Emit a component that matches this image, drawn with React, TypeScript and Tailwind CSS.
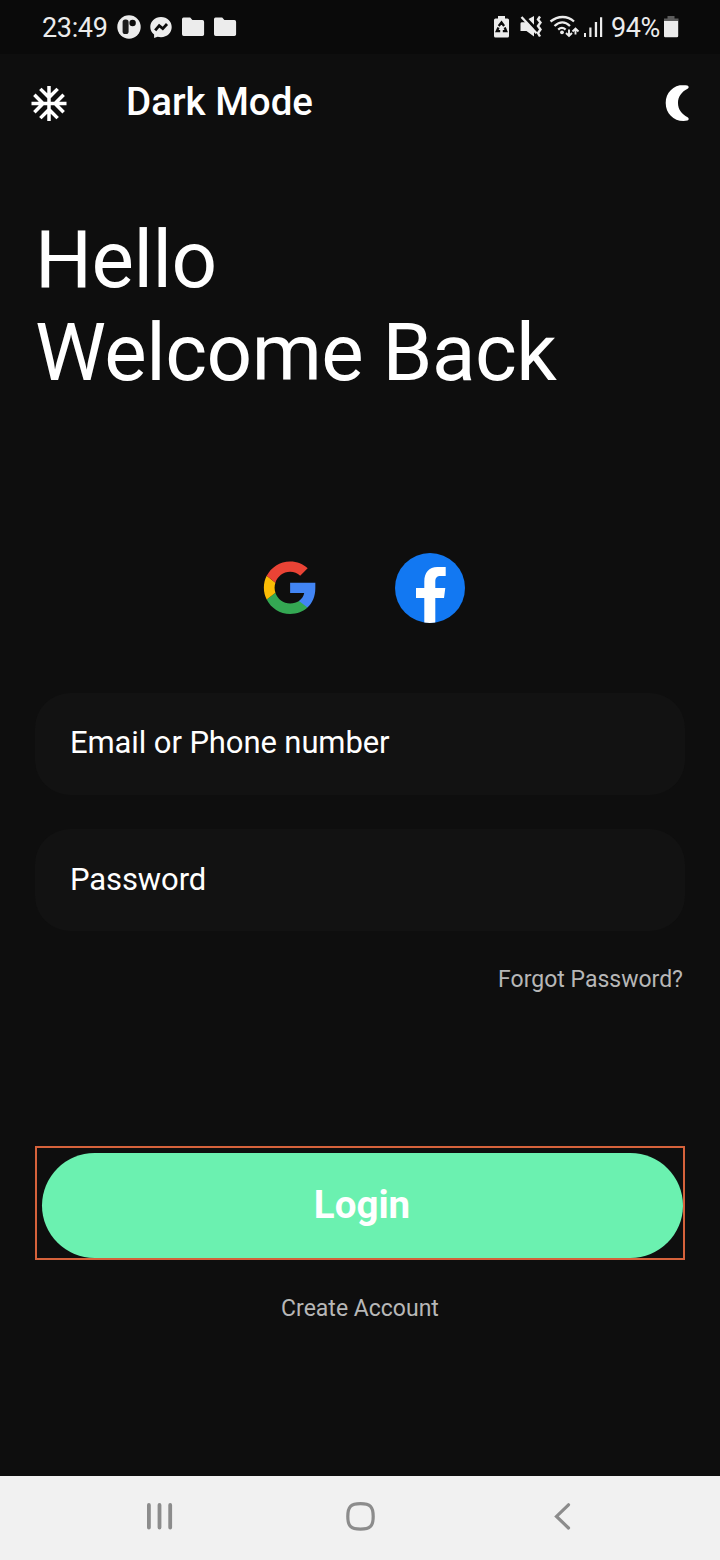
import type { ReactNode } from "react";
import { MdAcUnit } from "react-icons/md";

function StatusBar() {
  return (
    <header className="flex h-[54px] items-center bg-[#0a0a0a] pl-[42px] text-[#ececec]">
      <span className="w-[75px] whitespace-nowrap pt-px text-[27px] leading-[54px] tracking-[-0.35px]">23:49</span>
      <svg className="h-[54px] w-[130px]" viewBox="117 0 130 54" fill="#ececec">
        <circle cx="129" cy="27" r="11.7" />
        <rect x="122.600" y="19.500" width="6" height="14.500" rx="2.600" fill="#1c1c1c" />
        <circle cx="132.600" cy="23" r="3.200" fill="#0a0a0a" />
        <path d="M161 17c-6.300 0-10.700 4.400-10.700 10.100 0 3.100 1.400 5.700 3.800 7.500v3.400l3.500-1.300c1.100.3 2.200.5 3.400.5 6.300 0 10.700-4.400 10.700-10.100S167.300 17 161 17z" />
        <path d="M155.200 30.400l4-4.800 3.600 3 4.200-4.600" fill="none" stroke="#0a0a0a" strokeWidth="2.800" />
        <path d="M183.500 17.500h6.700l2.200 2.500h10q1.700 0 1.700 1.700v12.600q0 1.700-1.700 1.700h-18.700q-1.700 0-1.700-1.700v-15q0-1.800 1.500-1.800zM215.500 17.500h6.700l2.200 2.500h10q1.700 0 1.700 1.700v12.600q0 1.700-1.700 1.700h-18.700q-1.700 0-1.700-1.700v-15q0-1.800 1.500-1.800z" />
      </svg>
      <svg className="ml-[243px] h-[54px] w-[121px]" viewBox="490 0 121 54" fill="#ececec">
        <path d="M498 16h7v2.500h2.500q1.500 0 1.500 1.500v16q0 1.500-1.500 1.500h-12q-1.500 0-1.500-1.500V20q0-1.500 1.500-1.500h2.500z" />
        <path d="M498.700 26l2.800-3.500 2.600 3.500M504.700 27.500l1.500 3.700h-3.400M500.200 31.200h-3.400l1.700-3.700" fill="none" stroke="#0a0a0a" strokeWidth="2.300" />
        <path d="M522 22.200h4l2 1.200 6 6v7.100l-7.500-5.400H520.500v-7.500q0-1.400 1.500-1.400zM528.500 19l5.500-3v8.800z" />
        <path d="M521.500 17l15 16.200" fill="none" stroke="#ececec" strokeWidth="2.400" />
        <path d="M540 16.500l-2 3 2.500 3-2.500 3.500 2.500 3.500-2.500 3.500 2 3.500" fill="none" stroke="#ececec" strokeWidth="2.400" />
        <g fill="none" stroke="#ececec" strokeWidth="2.300">
          <path d="M550.500 21.500c7.500-6 17-6 23.500 0M554.500 26c5-4.600 10.700-4.600 15.500 0M558.200 29.600c2.400-2.200 5-2.200 7.400 0" />
          <path d="M569 29.500v5.800M566 33l3 3 3-3M575.500 34.500V29M572.500 31.500l3-3 3 3" strokeWidth="1.900" />
        </g>
        <circle cx="562" cy="32.300" r="1.900" />
        <path d="M584 33h2v4h-2zM589.300 27.500h2.200V37h-2.200zM594.800 22h2.300v15h-2.300zM600 17.300h2.200V37H600z" />
      </svg>
      <span className="w-[52px] whitespace-nowrap pt-px text-[27px] leading-[54px] tracking-[-0.4px]">94%</span>
      <svg className="h-[54px] w-[18px]" viewBox="663 0 18 54">
        <path d="M667.500 16h7v2.500h4V21H664v-2.500h3.500z" fill="#5c5c5c" />
        <path d="M664 21h14.200v15q0 1.300-1.300 1.300h-11.600q-1.300 0-1.300-1.300z" fill="#ececec" />
      </svg>
    </header>
  );
}

function Toolbar() {
  return (
    <div className="flex h-[98px] items-center pl-[28px] pr-[30px]">
      <MdAcUnit className="h-[43px] w-[42px]" />
      <h1 className="ml-[56px] flex-1 text-[38.5px] leading-[48px] font-medium -translate-y-px">Dark Mode</h1>
      <svg className="h-[38px] w-[26px]" viewBox="664 84 26 38" fill="white">
        <path d="M683.500 85C673.300 85 665.700 92.700 665.700 103S673.300 121 683.500 121c1.400 0 2.600-.2 3.900-.5 1.700-.5 1.700-2.600.2-3.300C681.600 114.200 678 109.200 678 103s3.600-11.200 9.600-14.200c1.500-.7 1.500-2.800-.2-3.300-1.300-.3-2.500-.5-3.900-.5z" />
      </svg>
    </div>
  );
}

function SocialButtons() {
  return (
    <div className="flex h-[70px]">
      <svg className="ml-[261px] mt-[6px] h-[58px] w-[58px]" viewBox="-0.2 0 24.300 24.300">
        <path fill="#4285F4" d="M22.560 12.250V10H12v4.260h5.920c-.26 1.370-1.040 2.530-2.210 3.310v2.770h3.570c2.080-1.920 3.280-4.740 3.280-8.090z" />
        <path fill="#34A853" d="M12 23c2.970 0 5.460-.98 7.280-2.660l-3.570-2.770c-.98.66-2.230 1.060-3.710 1.060-2.860 0-5.290-1.930-6.160-4.530L2.180 16.940C3.990 20.530 7.700 23 12 23z" />
        <path fill="#FBBC05" d="M5.840 14.090c-.22-.66-.35-1.360-.35-2.090s.13-1.430.35-2.090L2.180 7.070C1.430 8.550 1 10.220 1 12s.43 3.450 1.180 4.930l3.660-2.840z" />
        <path fill="#EA4335" d="M12 5.380c1.620 0 3.060.56 4.210 1.640l3.150-3.150C17.450 2.090 14.970 1 12 1 7.700 1 3.990 3.470 2.180 7.070l3.660 2.840c.87-2.600 3.300-4.530 6.160-4.530z" />
      </svg>
      <svg className="ml-[76px] h-[70px] w-[70px]" viewBox="395 553 70 70">
        <circle cx="430" cy="588" r="35" fill="#1278f2" />
        <path fill="white" d="M424.300 622.500V598H416V588h8.300v-6.500c0-9 4.700-14.500 13-14.500h8.400v9h-5c-4 0-5.400 1.900-5.400 5.500v6.500h10l-1.300 10h-8.700v24.500q-5.500.8-11 0z" />
      </svg>
    </div>
  );
}

function Field({ children }: { children: ReactNode }) {
  return (
    <div className="mx-[35px] flex h-[102px] items-center rounded-[35px] bg-[#121212] pl-[35px] text-[31px] tracking-[-0.1px]">
      {children}
    </div>
  );
}

function NavigationBar() {
  return (
    <nav className="mt-auto flex h-[84px] items-center bg-[#f1f1f1] pb-[4px]">
      <svg className="ml-[144px] h-[32px] w-[32px]" viewBox="144 1500 32 32" fill="none" stroke="#8c8c8c" strokeWidth="3.800" strokeLinecap="round">
        <path d="M148.900 1505v22.500M159.500 1505v22.500M170.200 1505v22.500" />
      </svg>
      <svg className="ml-[168px] h-[32px] w-[32px]" viewBox="344 1500 32 32" fill="none" stroke="#8c8c8c" strokeWidth="3.200">
        <path d="M360.500 1503.600c9.700 0 12.700 3 12.700 12.800s-3 12.800-12.700 12.800-12.700-3-12.700-12.800 3-12.800 12.700-12.800z" />
      </svg>
      <svg className="ml-[170px] h-[32px] w-[32px]" viewBox="546 1500 32 32" fill="none" stroke="#8c8c8c" strokeWidth="3.200" strokeLinecap="round">
        <path d="M568.500 1504.800l-12 11.600 12 11.600" />
      </svg>
    </nav>
  );
}

export default function App() {
  return (
    <div className="flex h-[1560px] w-[720px] flex-col overflow-hidden bg-[#0e0e0e] font-[Roboto,sans-serif] text-white">
      <StatusBar />
      <Toolbar />
      <h2 className="mt-[62px] h-[339px] pl-[35px] text-[80px] leading-[93px] tracking-[-0.5px]">
        Hello
        <br />
        Welcome Back
      </h2>
      <SocialButtons />
      <form className="mt-[70px] flex flex-col gap-[34px]">
        <Field><span className="-translate-y-px">Email or Phone number</span></Field>
        <Field><span>Password</span></Field>
      </form>
      <a className="mt-[33px] pr-[37px] text-right text-[23px] leading-[32px] text-[#b7b7b7]">Forgot Password?</a>
      <div className="mx-[35px] mt-[150px] h-[114px] border-2 border-[#d5623b] pt-[5px] pl-[5px]">
        <button className="block h-[105px] w-full rounded-full bg-[#6bf1b0] pr-px text-[38.5px] leading-[103px] font-bold"><span className="block -translate-y-px">Login</span></button>
      </div>
      <a className="mt-[33px] text-center text-[23px] leading-[32px] text-[#b7b7b7]">Create Account</a>
      <NavigationBar />
    </div>
  );
}
